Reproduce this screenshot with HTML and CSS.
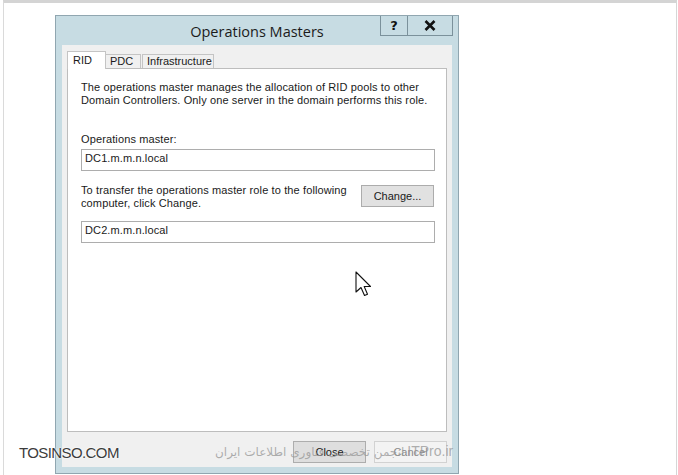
FILE: index.html
```html
<!DOCTYPE html>
<html>
<head>
<meta charset="utf-8">
<link rel="stylesheet" href="styles.css">
</head>
<body>
<div class="screen">
  <div class="dialog">
    <div class="titlebar">
      <div class="title">Operations Masters</div>
      <div class="caption-btns">
        <div class="cbtn help">?</div>
        <div class="cbtn close">
          <svg width="12" height="11" viewBox="0 0 12 11"><path d="M1.5 1 L10.5 10 M10.5 1 L1.5 10" stroke="#111" stroke-width="2.6" fill="none"/></svg>
        </div>
      </div>
    </div>
    <div class="client">
      <div class="tabs">
        <div class="tab active">RID</div>
        <div class="tab pdc">PDC</div>
        <div class="tab infra">Infrastructure</div>
      </div>
      <div class="panel">
        <p class="desc">The operations master manages the allocation of RID pools to other Domain Controllers. Only one server in the domain performs this role.</p>
        <div class="label">Operations master:</div>
        <div class="field">DC1.m.m.n.local</div>
        <div class="transfer">
          <div class="transfer-text">To transfer the operations master role to the following computer, click Change.</div>
          <div class="btn change">Change...</div>
        </div>
        <div class="field field2">DC2.m.m.n.local</div>
      </div>
      <div class="buttons">
        <div class="btn close-btn">Close</div>
        <div class="btn cancel-btn">Cancel</div>
      </div>
    </div>
  </div>
</div>
<div class="wm-left">TOSINSO.COM</div>
<div class="wm-right"><span class="wm-fa">انجمن تخصصی فناوری اطلاعات ایران</span> <span class="wm-en">ITPro.ir</span></div>
<svg class="cursor" width="18" height="28" viewBox="0 0 18 28">
  <path d="M1 1 L1 21 L6 16.5 L9.5 24.5 L12.5 23.2 L9.2 15.5 L15.5 15.5 Z" fill="#fff" stroke="#111" stroke-width="1.1" stroke-linejoin="round"/>
</svg>
</body>
</html>
```
FILE: styles.css
```css
html, body {
  margin: 0;
  padding: 0;
  background: #fff;
}
body {
  width: 678px;
  height: 475px;
  overflow: hidden;
  position: relative;
  font-family: "Liberation Sans", Arial, sans-serif;
  font-size: 11px;
  color: #1a1a1a;
}
.screen {
  height: 475px;
  box-sizing: border-box;
  margin: 0 1px 0 3px;
  border-top: 3px solid #d4d4d4;
  border-left: 1px solid #dadada;
  border-right: 1px solid #d6d6d6;
  padding: 12px 0 0 51px;
}
.dialog {
  width: 404px;
  box-sizing: border-box;
  border: 1px solid #90a6b0;
  background: #c7dce3;
  padding: 0 6px 6px;
}
.titlebar {
  height: 29px;
  display: grid;
  grid-template-columns: 1fr auto 1fr;
  align-items: start;
}
.title {
  grid-column: 2;
  font-family: "Open Sans", "Liberation Sans", sans-serif;
  font-size: 14.5px;
  line-height: 29px;
  padding-top: 1px;
  color: #1b1b1b;
  white-space: nowrap;
}
.caption-btns {
  grid-column: 3;
  justify-self: end;
  display: flex;
  margin-right: -1px;
}
.cbtn {
  height: 20px;
  box-sizing: border-box;
  border: 1px solid #7b919b;
  border-top: none;
  display: flex;
  align-items: center;
  justify-content: center;
}
.cbtn.help {
  width: 28px;
  font-family: "DejaVu Sans", sans-serif;
  font-weight: bold;
  font-size: 13px;
  color: #111;
}
.cbtn.close {
  width: 45px;
  border-left: none;
}
.client {
  background: #f0f0f0;
  height: 422px;
  box-sizing: border-box;
  padding: 6px 5px 0 5px;
}
.tabs {
  height: 17px;
  display: flex;
  align-items: flex-end;
}
.tab {
  box-sizing: border-box;
  border: 1px solid #c4c4c4;
  border-bottom: none;
  background: #f0f0f0;
  padding: 0 4px;
  line-height: 13px;
  height: 14px;
}
.tab.active {
  position: relative;
  z-index: 1;
  width: 39px;
  height: 18px;
  margin-bottom: -1px;
  background: #fff;
  line-height: 16px;
  padding-left: 5px;
}
.tab.pdc {
  width: 36px;
  margin-left: -1px;
}
.tab.infra {
  width: 72px;
  margin-left: 1px;
}
.panel {
  height: 364px;
  box-sizing: border-box;
  border: 1px solid #bdbdbd;
  background: #fff;
  padding: 12px 11px 0 13px;
  line-height: 13px;
  letter-spacing: 0.12px;
}
.desc {
  margin: 0;
}
.label {
  margin-top: 26px;
}
.field {
  margin-top: 3px;
  height: 22px;
  box-sizing: border-box;
  border: 1px solid #adadad;
  padding: 1px 3px;
  line-height: 14px;
}
.transfer {
  margin-top: 13px;
  display: flex;
  align-items: flex-start;
}
.transfer-text {
  flex: 1;
  padding-right: 8px;
}
.btn {
  width: 73px;
  flex: none;
  height: 22px;
  box-sizing: border-box;
  border: 1px solid #acacac;
  background: #e1e1e1;
  display: flex;
  align-items: center;
  justify-content: center;
  color: #1a1a1a;
  letter-spacing: 0;
}
.change {
  margin-top: 1px;
  margin-right: 1px;
}
.field2 {
  margin-top: 11px;
}
.buttons {
  margin-top: 9px;
  display: flex;
  justify-content: flex-end;
  gap: 8px;
}
.close-btn {
  background: #dedede;
  border-color: #adadad;
}
.cancel-btn {
  background: #f3f3f3;
  border-color: #d2d2d2;
  color: #8a8a8a;
}
.wm-left {
  position: absolute;
  left: 19px;
  top: 444px;
  font-size: 15px;
  letter-spacing: -0.6px;
  color: #3c3c3c;
  text-shadow: 0 0 2px #fff, 0 0 2px #fff;
}
.wm-right {
  position: absolute;
  left: 215px;
  top: 443px;
  white-space: nowrap;
  direction: ltr;
  color: rgba(150, 150, 150, 0.75);
}
.wm-fa {
  font-family: "DejaVu Sans", sans-serif;
  font-size: 12px;
}
.wm-en {
  font-family: "Liberation Sans", sans-serif;
  font-size: 14px;
}
.cursor {
  position: absolute;
  left: 355px;
  top: 271px;
}
```
